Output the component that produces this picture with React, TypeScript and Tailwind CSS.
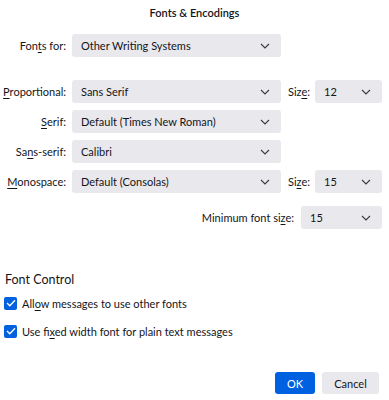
import React from "react";

function Chevron() {
  return (
    <svg width="10" height="6" viewBox="0 0 10 6" className="shrink-0">
      <path d="M1 1 L5 5 L9 1" fill="none" stroke="#3a3a3a" strokeWidth="1.1" />
    </svg>
  );
}

function Select({ value, w }: { value: string; w: string }) {
  return (
    <div className={`${w} h-[23px] rounded-[3px] bg-[#e9e9ed] flex items-center justify-between pl-[9px] pr-[11px]`}>
      <span>{value}</span>
      <Chevron />
    </div>
  );
}

function Label({ pre, key_, post }: { pre: string; key_: string; post: string }) {
  return (
    <span className="whitespace-nowrap">
      {pre}
      <span className="underline underline-offset-2">{key_}</span>
      {post}
    </span>
  );
}

function Check({ children }: { children: React.ReactNode }) {
  return (
    <div className="flex items-center h-[20px]">
      <div className="w-[13px] h-[13px] ml-[4px] rounded-[2px] bg-[#0061e0] flex items-center justify-center">
        <svg width="10" height="8" viewBox="0 0 10 8">
          <path d="M1 4 L3.8 6.8 L9 1.2" fill="none" stroke="white" strokeWidth="1.3" />
        </svg>
      </div>
      <span className="ml-[5px]">{children}</span>
    </div>
  );
}

export default function App() {
  return (
    <div
      className="w-[389px] h-[400px] bg-white text-[#15141a] text-[11px] leading-none flex flex-col"
      style={{ fontFamily: 'Lato, "Noto Sans", sans-serif' }}
    >
      <div className="h-[25px] flex items-center justify-center text-[11px] font-semibold">Fonts &amp; Encodings</div>

      <div className="flex items-center mt-[9px]">
        <div className="w-[66px] text-right"><Label pre="Fon" key_="t" post="s for:" /></div>
        <div className="ml-[6px]"><Select value="Other Writing Systems" w="w-[209px]" /></div>
      </div>

      <div className="flex flex-col gap-[7px] mt-[23px]">
        <div className="flex items-center">
          <div className="w-[66px] text-right"><Label pre="" key_="P" post="roportional:" /></div>
          <div className="ml-[6px]"><Select value="Sans Serif" w="w-[209px]" /></div>
          <div className="ml-[7px] w-[27px]"><Label pre="Siz" key_="e" post=":" /></div>
          <Select value="12" w="w-[67px]" />
        </div>
        <div className="flex items-center">
          <div className="w-[66px] text-right"><Label pre="" key_="S" post="erif:" /></div>
          <div className="ml-[6px]"><Select value="Default (Times New Roman)" w="w-[209px]" /></div>
        </div>
        <div className="flex items-center">
          <div className="w-[66px] text-right"><Label pre="Sa" key_="n" post="s-serif:" /></div>
          <div className="ml-[6px]"><Select value="Calibri" w="w-[209px]" /></div>
        </div>
        <div className="flex items-center">
          <div className="w-[66px] text-right"><Label pre="" key_="M" post="onospace:" /></div>
          <div className="ml-[6px]"><Select value="Default (Consolas)" w="w-[209px]" /></div>
          <div className="ml-[7px] w-[27px]"><Label pre="Si" key_="z" post="e:" /></div>
          <Select value="15" w="w-[67px]" />
        </div>
      </div>

      <div className="flex items-center justify-end mt-[13px] pr-[7px]">
        <Label pre="Minimum font si" key_="z" post="e:" />
        <div className="ml-[7px]"><Select value="15" w="w-[81px]" /></div>
      </div>

      <div className="mt-[43px] ml-[5px] text-[12.5px] h-[16px] flex items-center">Font Control</div>
      <div className="flex flex-col gap-[8px] mt-[5px]">
        <Check><Label pre="All" key_="o" post="w messages to use other fonts" /></Check>
        <Check><Label pre="Use fi" key_="x" post="ed width font for plain text messages" /></Check>
      </div>

      <div className="flex justify-end gap-[7px] mt-[31px] pr-[10px]">
        <div className="w-[40px] h-[22px] rounded-[3px] bg-[#0061e0] text-white flex items-center justify-center">OK</div>
        <div className="w-[57px] h-[22px] rounded-[3px] bg-[#e9e9ed] flex items-center justify-center">Cancel</div>
      </div>
    </div>
  );
}
